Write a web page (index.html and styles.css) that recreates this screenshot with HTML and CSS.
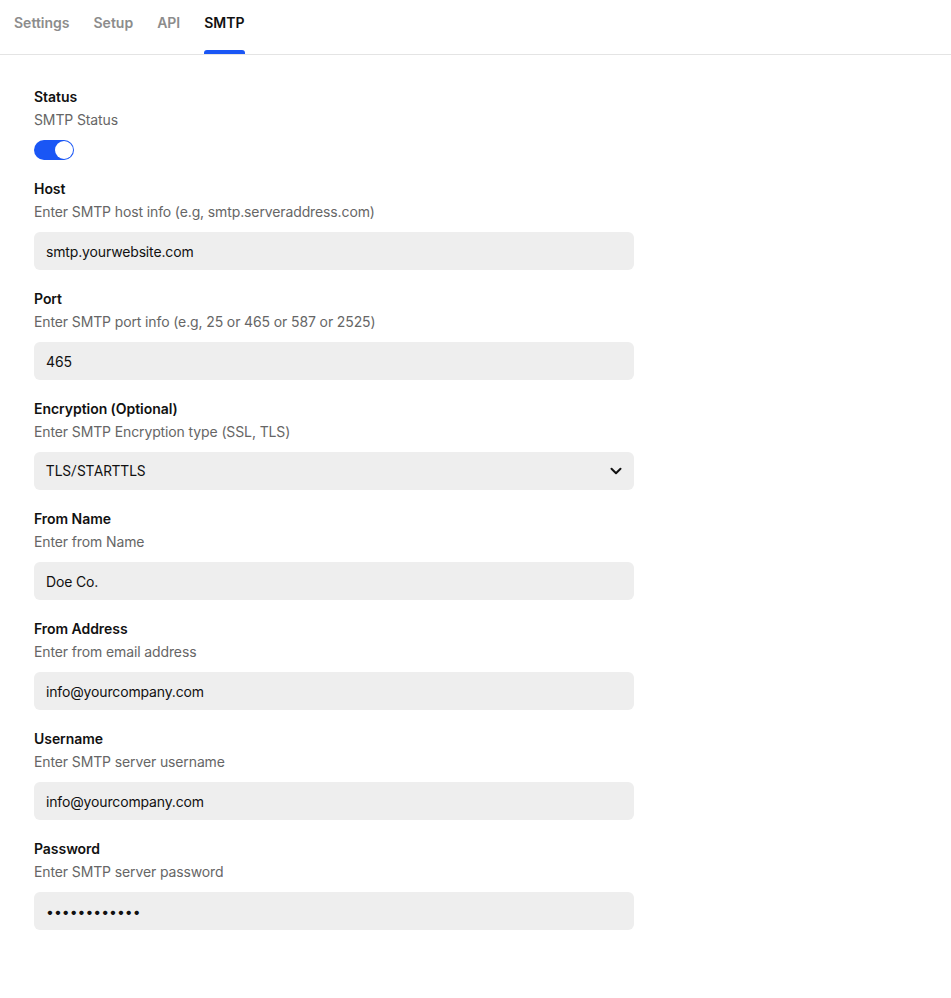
FILE: index.html
```html
<!DOCTYPE html>
<html>
<head>
<meta charset="utf-8">
<link rel="stylesheet" href="styles.css">
</head>
<body>
<nav class="tabs">
  <a class="tab">Settings</a>
  <a class="tab">Setup</a>
  <a class="tab">API</a>
  <a class="tab active">SMTP</a>
</nav>
<main class="form">
  <section class="field">
    <div class="label">Status</div>
    <div class="desc">SMTP Status</div>
    <div class="toggle"><span class="knob"></span></div>
  </section>
  <section class="field">
    <div class="label">Host</div>
    <div class="desc">Enter SMTP host info (e.g, smtp.serveraddress.com)</div>
    <div class="input">smtp.yourwebsite.com</div>
  </section>
  <section class="field">
    <div class="label">Port</div>
    <div class="desc">Enter SMTP port info (e.g, 25 or 465 or 587 or 2525)</div>
    <div class="input">465</div>
  </section>
  <section class="field">
    <div class="label">Encryption (Optional)</div>
    <div class="desc">Enter SMTP Encryption type (SSL, TLS)</div>
    <div class="input select"><span class="select-text">TLS/STARTTLS</span>
      <svg class="chev" width="14" height="14" viewBox="0 0 14 14"><path d="M2.5 4.8 L7 9.2 L11.5 4.8" fill="none" stroke="#111" stroke-width="2" stroke-linecap="round" stroke-linejoin="round"/></svg>
    </div>
  </section>
  <section class="field">
    <div class="label">From Name</div>
    <div class="desc">Enter from Name</div>
    <div class="input">Doe Co.</div>
  </section>
  <section class="field">
    <div class="label">From Address</div>
    <div class="desc">Enter from email address</div>
    <div class="input">info@yourcompany.com</div>
  </section>
  <section class="field">
    <div class="label">Username</div>
    <div class="desc">Enter SMTP server username</div>
    <div class="input">info@yourcompany.com</div>
  </section>
  <section class="field">
    <div class="label">Password</div>
    <div class="desc">Enter SMTP server password</div>
    <div class="input password">••••••••••••</div>
  </section>
</main>
</body>
</html>
```
FILE: styles.css
```css
* { box-sizing: border-box; }
body {
  margin: 0;
  background: #fff;
  font-family: Inter, "Liberation Sans", sans-serif;
  color: #111;
}
.tabs {
  display: flex;
  gap: 24px;
  padding: 0 14px;
  height: 55px;
  border-bottom: 1px solid #e4e4e4;
}
.tab {
  position: relative;
  font-size: 14px;
  font-weight: 600;
  color: #8c8c8c;
  line-height: 20px;
  padding-top: 13px;
}
.tab.active { color: #111; }
.tab.active::after {
  content: "";
  position: absolute;
  left: 0;
  right: 0;
  bottom: 0;
  height: 4px;
  border-radius: 3px 3px 0 0;
  background: #1a56f5;
}
.form {
  padding: 32px 34px 0;
  display: flex;
  flex-direction: column;
  gap: 19px;
}
.field {
  display: flex;
  flex-direction: column;
}
.label {
  font-size: 14px;
  font-weight: 600;
  line-height: 20px;
  color: #111;
  letter-spacing: -0.05px;
}
.desc {
  margin-top: 3px;
  font-size: 14px;
  line-height: 20px;
  color: #666;
  letter-spacing: -0.12px;
}
.toggle {
  margin-top: 10px;
  width: 40px;
  height: 20px;
  border-radius: 10px;
  background: #1a56f5;
  position: relative;
}
.knob {
  position: absolute;
  right: 1px;
  top: 1px;
  width: 18px;
  height: 18px;
  border-radius: 50%;
  background: #fff;
}
.input {
  margin-top: 10px;
  width: 600px;
  height: 38px;
  border-radius: 6px;
  background: #eeeeee;
  padding: 0 12px;
  display: flex;
  align-items: center;
  font-size: 14px;
  color: #111;
  letter-spacing: -0.15px;
}
.select { justify-content: space-between; padding-right: 11px; }
.select-text { font-family: Roboto, "Liberation Sans", sans-serif; font-size: 14px; letter-spacing: 0.3px; }
.password { letter-spacing: 0; font-size: 14px; }
```
